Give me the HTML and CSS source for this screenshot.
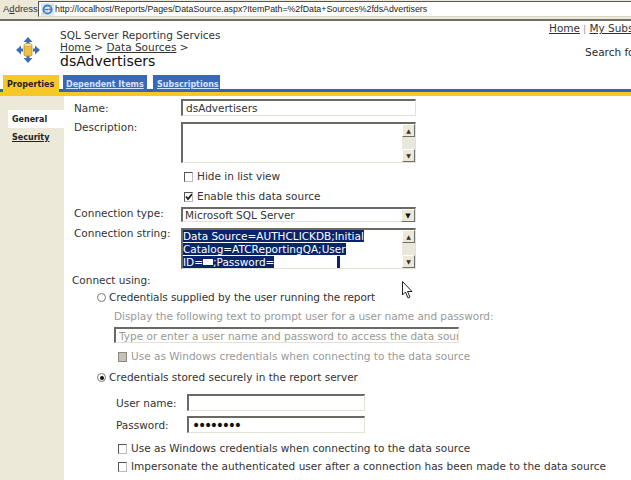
FILE: index.html
```html
<!DOCTYPE html>
<html lang="en">
<head>
<meta charset="utf-8">
<title>dsAdvertisers</title>
<link rel="stylesheet" href="styles.css">
</head>
<body>
<div class="page">
  <div class="addressbar">
    <span class="addr-label">A<u>d</u>dress</span>
    <div class="addr-box">
      <svg class="ie" width="16" height="16" viewBox="0 0 16 16"><rect x="0" y="0" width="16" height="16" fill="#dfe8f5"/><circle cx="8" cy="8" r="5" fill="none" stroke="#3a7fd0" stroke-width="2.4"/><path d="M4 8h8" stroke="#3a7fd0" stroke-width="1.6"/><path d="M2 13C5 13 12 6 14 2" fill="none" stroke="#e0a830" stroke-width="1"/></svg>
      <span class="addr-url">http://localhost/Reports/Pages/DataSource.aspx?ItemPath=%2fData+Sources%2fdsAdvertisers</span>
    </div>
  </div>

  <header class="header">
    <svg class="logo" width="24" height="26" viewBox="0 0 24 26">
      <path d="M12 0l4.5 5h-3v2h-3V5h-3z" fill="#3d6db5"/>
      <path d="M12 26l4.500-5h-3v-2h-3v2h-3z" fill="#3d6db5"/>
      <path d="M0 13l5-4.500v3h2v3H5v3z" fill="#3d6db5"/>
      <path d="M24 13l-5-4.500v3h-2v3h2v3z" fill="#3d6db5"/>
      <rect x="8" y="7" width="8" height="12" rx="1.500" fill="#f0c040" stroke="#b58a20" stroke-width=".7"/>
      <ellipse cx="12" cy="8" rx="4" ry="1.500" fill="#fbe9a0" stroke="#b58a20" stroke-width=".5"/>
    </svg>
    <div class="crumbs">
      <div>SQL Server Reporting Services</div>
      <div><a class="lnk">Home</a> &gt; <a class="lnk">Data Sources</a> &gt;</div>
      <div class="title">dsAdvertisers</div>
    </div>
    <div class="global">
      <div class="global-links"><a class="lnk">Home</a> <span class="sep">|</span> <a class="lnk">My Subscriptions</a></div>
      <div class="search">Search for:</div>
    </div>
  </header>

  <nav class="tabs">
    <span class="tab tab-on">Properties</span>
    <a class="tab tab-dep">Dependent Items</a>
    <a class="tab tab-sub">Subscriptions</a>
  </nav>

  <div class="main">
    <aside class="side">
      <div class="side-item side-on">General</div>
      <a class="side-item side-link">Security</a>
    </aside>
    <form class="form">
      <div class="row row-name">
        <label class="lab">Name:</label>
        <input class="txt txt-wide" value="dsAdvertisers">
      </div>
      <div class="row row-desc">
        <label class="lab">Description:</label>
        <div class="area"><div class="area-text"></div><div class="scroll"><span class="sb">▲</span><span class="sb">▼</span></div></div>
      </div>
      <div class="check check-hide"><span class="box"></span>Hide in list view</div>
      <div class="check check-enable"><span class="box box-on"><svg class="tick" width="8" height="8" viewBox="0 0 8 8"><path d="M1 3.500l2 2.500 4-5" fill="none" stroke="#222" stroke-width="1.800"/></svg></span>Enable this data source</div>
      <div class="row row-type">
        <label class="lab">Connection type:</label>
        <div class="select"><span>Microsoft SQL Server</span><span class="sb sb-drop">▼</span></div>
      </div>
      <div class="row row-conn">
        <label class="lab">Connection string:</label>
        <div class="area"><div class="area-text sel"><span>Data Source=AUTHCLICKDB;Initial</span><br><span>Catalog=ATCReportingQA;User</span><br><span>ID=<i class="blank"></i>;Password=<i class="blank blank-long"></i></span></div><div class="scroll"><span class="sb">▲</span><span class="sb">▼</span></div></div>
      </div>
      <div class="connect">Connect using:</div>
      <div class="radio radio-first"><span class="dot"></span>Credentials supplied by the user running the report</div>
      <div class="prompt">Display the following text to prompt user for a user name and password:</div>
      <input class="txt txt-prompt" value="Type or enter a user name and password to access the data source" disabled>
      <div class="check check-sub check-dis"><span class="box box-dis"></span>Use as Windows credentials when connecting to the data source</div>
      <div class="radio radio-second"><span class="dot dot-on"></span>Credentials stored securely in the report server</div>
      <div class="cred cred-user"><label class="cred-lab">User name:</label><input class="txt txt-cred"></div>
      <div class="cred cred-pass"><label class="cred-lab">Password:</label><input class="txt txt-cred txt-pass" type="password" value="12345678"></div>
      <div class="check check-sub check-win"><span class="box"></span>Use as Windows credentials when connecting to the data source</div>
      <div class="check check-sub check-imp"><span class="box"></span>Impersonate the authenticated user after a connection has been made to the data source</div>
    </form>
  </div>

  <svg class="cursor" width="11" height="18" viewBox="0 0 11 18"><path d="M.5.500v13.500l3-3 2.500 6 2-1-2.500-5.500h4.500z" fill="#fff" stroke="#222" stroke-width="1"/></svg>
</div>
</body>
</html>
```
FILE: styles.css
```css
* { box-sizing: border-box; }
html, body { margin: 0; padding: 0; }
body { background: #fff; font-family: "DejaVu Sans", Verdana, sans-serif; font-size: 10.500px; color: #2a2a2a; }
.page { position: relative; width: 631px; height: 480px; overflow: hidden; background: #fff; }

.addressbar { height: 21px; display: flex; align-items: flex-start; padding: 1px 0 0 3px; background: #ece9d8; border-bottom: 2px solid #6f6f68; }
.addr-label { width: 35px; font: 9.500px/16px "Liberation Sans", Arial, sans-serif; color: #333; }
.addr-box { flex: 1; height: 16px; display: flex; align-items: center; gap: 1px; margin-right: -4px; padding-left: 2px; background: #fff; border: 1px solid #555; border-bottom-color: #d8d6c8; border-right: 0; }
.ie { flex: none; width: 13px; height: 13px; }
.addr-url { font: 8.800px "Liberation Sans", Arial, sans-serif; color: #222; white-space: nowrap; }

.header { height: 54px; display: flex; }
.logo { flex: none; margin: 16px 0 0 16px; }
.crumbs { flex: none; width: 330px; margin-left: 20px; padding-top: 8px; line-height: 12px; color: #333; }
.title { font-size: 14px; line-height: 16px; color: #111; }
.lnk { text-decoration: underline; color: #333; }
.global { flex: none; margin-left: 159px; padding-top: 1px; white-space: nowrap; line-height: 13px; }
.sep { color: #888; font-size: 8px; }
.search { margin: 10px 0 0 36px; }

.tabs { height: 21px; display: flex; align-items: flex-start; border-bottom: 4px solid #f5c828; position: relative; }
.tabs::after { content: ""; position: absolute; left: 0; right: 0; bottom: 0; height: 3px; background: #3a62a8; z-index: 0; }
.tab { position: relative; z-index: 1; height: 17px; padding: 0 0 0 3px; font: bold 8px/19px "DejaVu Sans", sans-serif; background: #3a68b8; color: #d6e4ff; text-decoration: underline; white-space: nowrap; }
.tab-on { margin-left: 3px; width: 56px; height: 21px; background: #f5c828; color: #222; text-decoration: none; padding: 0 0 0 4px; }
.tab-dep { margin-left: 4px; width: 84px; }
.tab-sub { margin-left: 6px; width: 67px; padding-left: 4px; }

.main { display: flex; height: 384px; }
.side { flex: none; width: 64px; padding: 14px 0 0 8px; background: #ece9d8; }
.side-item { display: block; height: 18px; padding-left: 4px; font: bold 8px/20px "DejaVu Sans", sans-serif; color: #222; }
.side-on { background: #fff; }
.side-link { text-decoration: underline; }

.form { flex: 1; padding-top: 3px; color: #333; }
.row { display: flex; margin-left: 10px; }
.lab { flex: none; width: 107px; height: 13px; line-height: 13px; }
.row-name { height: 17px; }
.row-name .lab { margin-top: 3px; }
.row-desc { height: 41px; margin-top: 6px; }
.row-desc .lab { margin-top: -1px; }
.row-type { height: 15px; margin-top: 4px; }
.row-conn { height: 41px; margin-top: 6px; }
.row-conn .lab { margin-top: -1px; }

.txt { display: block; height: 17px; padding: 0 0 0 3px; font: 10.500px "DejaVu Sans", Verdana, sans-serif; color: #333; background: #fff; border: 1px solid #e4e2d6; border-top: 2px solid #6a6a64; border-left: 2px solid #6a6a64; outline: 0; }
.txt-wide { width: 235px; }
.txt-prompt { width: 345px; height: 16px; margin: 4px 0 0 50px; color: #9a9a92; }
.txt-cred { width: 178px; }
.txt-pass { letter-spacing: -2.300px; font-size: 14px; color: #111; }

.area { display: flex; width: 235px; height: 100%; border: 1px solid #e4e2d6; border-top: 2px solid #6a6a64; border-left: 2px solid #6a6a64; }
.area-text { flex: 1; min-width: 0; white-space: nowrap; line-height: 13px; overflow: hidden; color: #fff; }
.sel span { background: #0a246a; }
.sel i { display: inline-block; height: 6px; width: 10px; background: #fff; vertical-align: 1px; }
.sel .blank-long { width: 63px; height: 13px; vertical-align: -3px; margin-right: 3px; }
.scroll { flex: none; width: 13px; display: flex; flex-direction: column; justify-content: space-between; background: #e9e7dc; }
.sb { display: block; width: 13px; height: 13px; flex: none; font-size: 6px; line-height: 12px; text-align: center; color: #333; background: #ece9d8; border: 1px solid #fff; border-right-color: #716f64; border-bottom-color: #716f64; }
.sb-drop { width: 14px; color: #111; font-size: 7px; }

.select { display: flex; align-items: center; justify-content: space-between; width: 235px; padding-left: 2px; border: 1px solid #e4e2d6; border-top: 2px solid #6a6a64; border-left: 2px solid #6a6a64; }

.check { display: flex; align-items: center; height: 13px; line-height: 13px; white-space: nowrap; }
.box { flex: none; display: block; width: 9px; height: 10px; margin-right: 4px; background: #fff; border: 1px solid #bbb; border-top: 1px solid #555; border-left: 1px solid #555; overflow: hidden; }
.tick { display: block; width: 8px; height: 8px; }
.box-dis { background: #c4c2b8; border-color: #8a8a82; }
.check-hide { margin: 7px 0 0 120px; }
.check-enable { margin: 7px 0 0 120px; }
.connect { margin: 5px 0 0 8px; line-height: 13px; }
.radio { display: flex; align-items: center; height: 13px; line-height: 13px; margin-left: 33px; white-space: nowrap; }
.radio-first { margin-top: 4px; letter-spacing: -.080px; }
.radio-second { margin-top: 8px; }
.dot { flex: none; position: relative; width: 9px; height: 9px; margin-right: 3px; border-radius: 50%; background: #fff; border: 1px solid #777; }
.dot-on::after { content: ""; position: absolute; left: 1.500px; top: 1.500px; width: 4px; height: 4px; border-radius: 50%; background: #111; }
.prompt { margin: 6px 0 0 50px; line-height: 13px; color: #999; white-space: nowrap; letter-spacing: -.040px; }
.check-sub { margin-left: 54px; }
.check-dis { margin-top: 7px; color: #999; }
.cred { display: flex; align-items: center; margin-left: 52px; height: 17px; }
.cred-user { margin-top: 10px; }
.cred-pass { margin-top: 5px; }
.cred-lab { flex: none; width: 71px; }
.check-win { margin-top: 9px; }
.check-imp { margin-top: 5px; letter-spacing: .020px; }

.cursor { position: absolute; left: 402px; top: 281px; }
```
